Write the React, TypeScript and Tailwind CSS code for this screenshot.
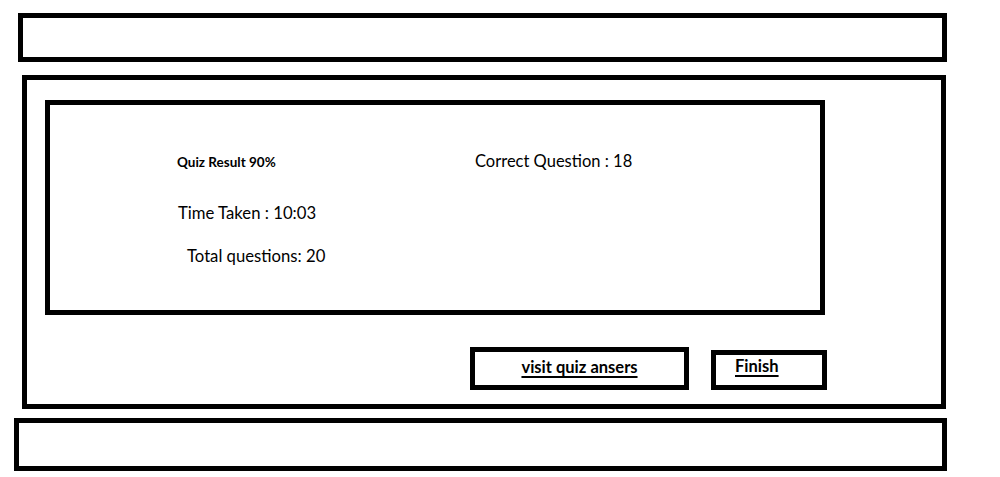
import React from "react";

interface Stat {
  label: string;
  className: string;
}

const leftStats: Stat[] = [
  {label: "Time Taken : 10:03", className: "ml-[128px] mt-[33px]"},
  {label: "Total questions: 20", className: "ml-[137px] mt-[23px]"},
];

export default function App() {
  return (
    <div className="w-[1000px] h-[477px] bg-white text-black font-['Lato',sans-serif] flex flex-col">
      <header className="ml-[18px] mt-[13px] w-[929px] h-[49px] border-[5px] border-black"/>

      <main className="ml-[22px] mt-[13px] w-[924px] h-[334px] shrink-0 border-[5px] border-black pl-[18px] pt-[20px] flex flex-col">
        <section className="w-[780px] h-[215px] shrink-0 border-[5px] border-black flex">
          <div className="w-[420px] flex flex-col pt-[49px]">
            <h2 className="ml-[127px] text-[13.5px] font-bold leading-[16px]">Quiz Result 90%</h2>
            {leftStats.map((item: Stat, index: number) => (
              <p key={`stat-${index}`} className={`${item.className} text-[16.7px] leading-[20px]`}>{item.label}</p>
            ))}
          </div>
          <div className="pt-[46px] ml-[5px]">
            <p className="text-[16.5px] leading-[20px]">Correct Question : 18</p>
          </div>
        </section>

        <div className="flex items-end mt-[32px] ml-[425px] gap-[22px]">
          <button className="w-[219px] h-[43px] border-[5px] border-black flex items-center justify-center">
            <span className="font-bold text-[16.5px] underline decoration-2 underline-offset-[3px] -mt-[3px]">visit quiz ansers</span>
          </button>
          <button className="w-[116px] h-[40px] border-[5px] border-black flex items-start pl-[19px]">
            <span className="font-bold text-[16.5px] underline decoration-2 underline-offset-[3px] -mt-[1px]">Finish</span>
          </button>
        </div>
      </main>

      <footer className="ml-[14px] mt-[9px] w-[933px] h-[53px] shrink-0 border-[5px] border-black"/>
    </div>
  );
}
